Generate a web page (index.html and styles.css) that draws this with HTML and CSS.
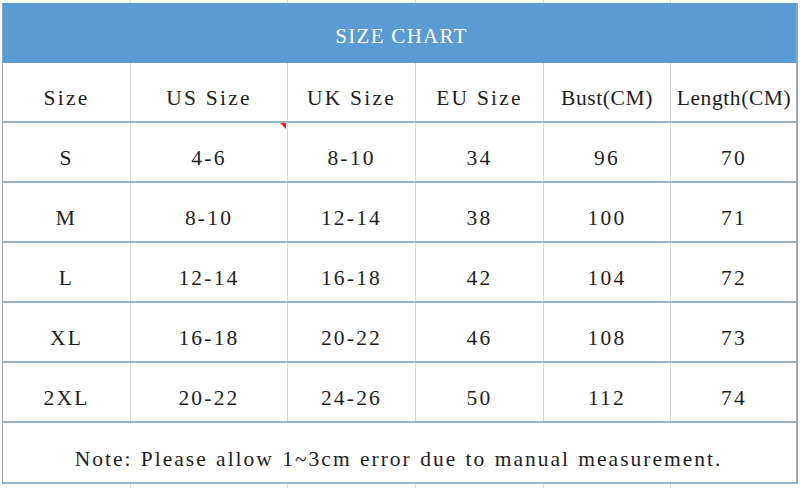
FILE: index.html
```html
<!DOCTYPE html>
<html>
<head>
<meta charset="utf-8">
<link rel="stylesheet" href="styles.css">
</head>
<body>
<div class="sheet">
  <div class="row strip"><div></div><div></div><div></div><div></div><div></div><div></div></div>
  <div class="table">
    <div class="title">SIZE CHART</div>
    <div class="row">
      <div class="cell">Size</div><div class="cell">US Size</div><div class="cell">UK Size</div><div class="cell">EU Size</div><div class="cell tight">Bust(CM)</div><div class="cell tight">Length(CM)</div>
    </div>
    <div class="row">
      <div class="cell">S</div><div class="cell note-cell">4-6<span class="flag"></span></div><div class="cell">8-10</div><div class="cell">34</div><div class="cell">96</div><div class="cell">70</div>
    </div>
    <div class="row">
      <div class="cell">M</div><div class="cell">8-10</div><div class="cell">12-14</div><div class="cell">38</div><div class="cell">100</div><div class="cell">71</div>
    </div>
    <div class="row">
      <div class="cell">L</div><div class="cell">12-14</div><div class="cell">16-18</div><div class="cell">42</div><div class="cell">104</div><div class="cell">72</div>
    </div>
    <div class="row">
      <div class="cell">XL</div><div class="cell">16-18</div><div class="cell">20-22</div><div class="cell">46</div><div class="cell">108</div><div class="cell">73</div>
    </div>
    <div class="row">
      <div class="cell">2XL</div><div class="cell">20-22</div><div class="cell">24-26</div><div class="cell">50</div><div class="cell">112</div><div class="cell">74</div>
    </div>
    <div class="footnote">Note: Please allow 1~3cm error due to manual measurement.</div>
  </div>
  <div class="row strip"><div></div><div></div><div></div><div></div><div></div><div></div></div>
</div>
</body>
</html>
```
FILE: styles.css
```css
* { box-sizing: border-box; }
html, body { margin: 0; padding: 0; background: #fff; }
body {
  width: 800px;
  height: 488px;
  overflow: hidden;
  font-family: "Liberation Serif", "Times New Roman", serif;
  color: #1e1e1e;
}
.sheet { width: 800px; padding-left: 2px; }
.row {
  display: grid;
  grid-template-columns: 128px 157px 128px 128px 127px 126px;
}
.strip { height: 3px; margin-left: 1px; }
.strip div { border-right: 1px solid #dcdcdc; }
.strip div:last-child { border-right: none; }
.strip:last-child { height: 4px; }
.table {
  width: 796px;
  border-left: 1px solid #8eaac6;
  border-right: 2px solid #8eaac6;
}
.title {
  height: 60px;
  background: #5b9bd5;
  color: #fff;
  font-size: 21px;
  letter-spacing: 1.3px;
  display: flex;
  align-items: center;
  justify-content: center;
  padding-top: 6px;
  padding-left: 4px;
}
.table .row {
  height: 60px;
  border-bottom: 2px solid #9cb3c7;
}
.cell {
  display: flex;
  align-items: center;
  justify-content: center;
  padding-top: 12px;
  font-size: 21.5px;
  letter-spacing: 2.2px;
  border-right: 1px solid #d6d6d6;
  position: relative;
}
.cell.tight { letter-spacing: 0.6px; }
.cell:last-child { border-right: none; }
.footnote {
  height: 61px;
  border-bottom: 2px solid #9cb3c7;
  display: flex;
  align-items: center;
  justify-content: center;
  padding-top: 13px;
  padding-right: 2px;
  font-size: 21.5px;
  letter-spacing: 2px;
  word-spacing: 1px;
}
.flag {
  position: absolute;
  top: 0;
  right: 1px;
  width: 0;
  height: 0;
  border-top: 6px solid #e0201c;
  border-left: 6px solid transparent;
}
```
